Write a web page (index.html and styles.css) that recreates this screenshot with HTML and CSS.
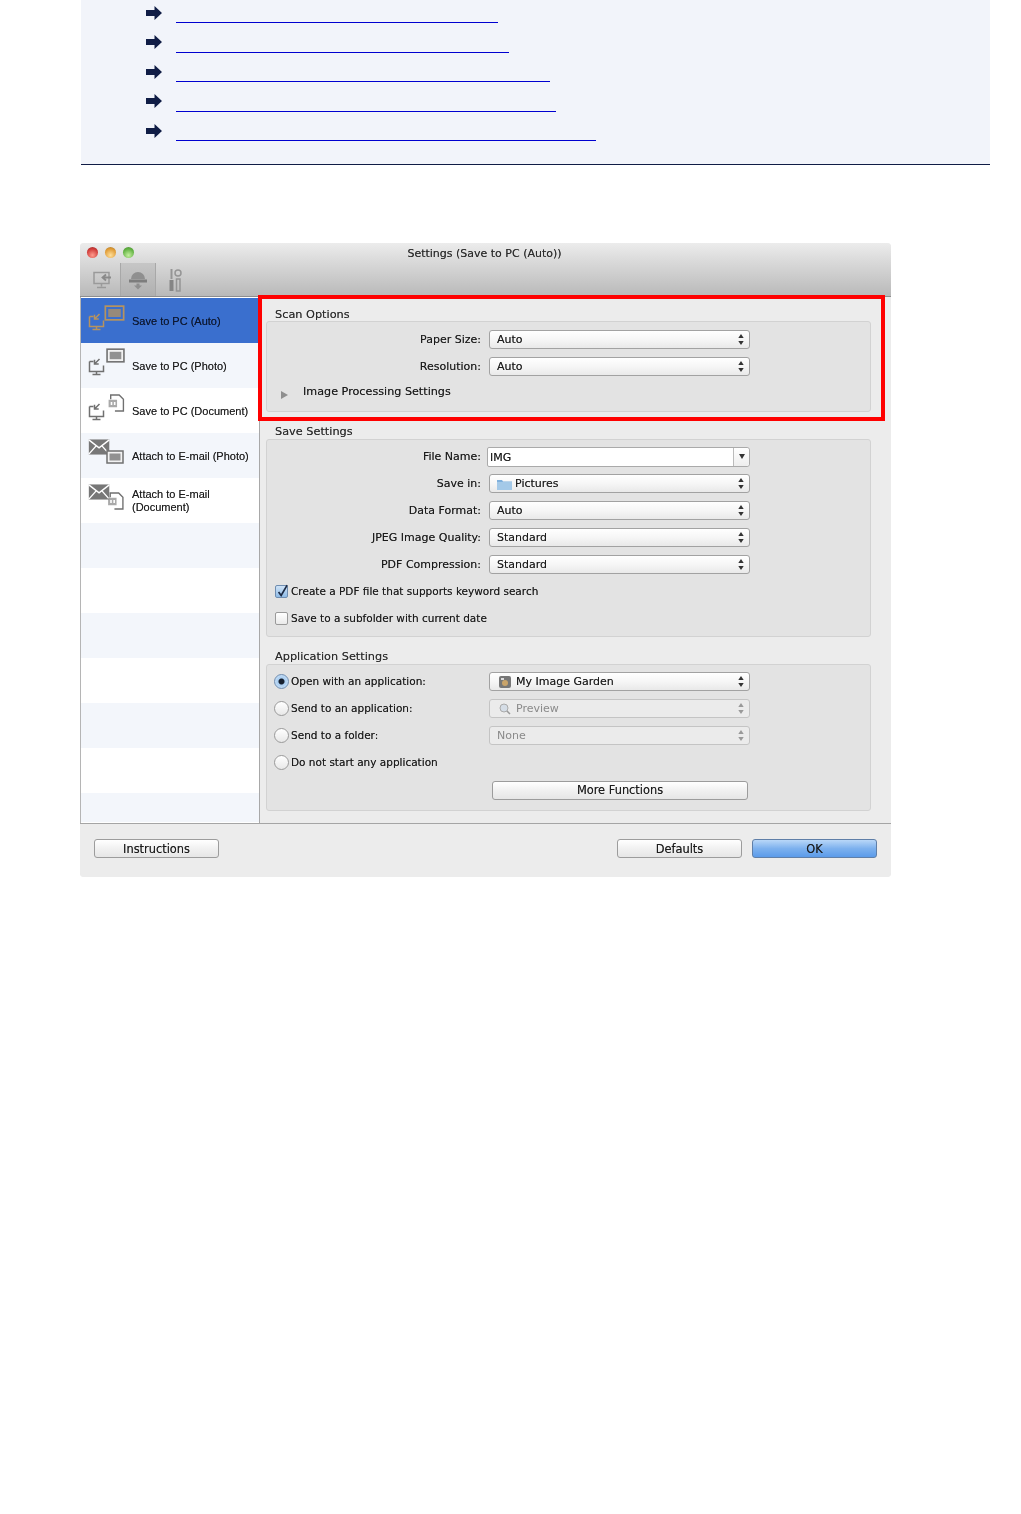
FILE: index.html
```html
<!DOCTYPE html>
<html lang="en">
<head>
<meta charset="utf-8">
<title>Settings (Save to PC (Auto))</title>
<link rel="stylesheet" href="styles.css">
</head>
<body>
<svg class="defs" width="0" height="0" aria-hidden="true">
  <symbol id="arrow" viewBox="0 0 16 14"><path d="M0 4h8.500V0L16 7l-7.500 7V10H0z"/></symbol>
  <symbol id="monitor" viewBox="0 0 20 20">
    <path d="M1.500 5.500h4M1.500 5.500v10h14v-6M8.500 15.500v3M4.500 18.500h8" fill="none" stroke="currentColor" stroke-width="1.500"/>
    <path d="M11.500 3 7 7.500M6.500 3.800v4.200h4.200" fill="none" stroke="currentColor" stroke-width="1.500"/>
  </symbol>
  <symbol id="photo" viewBox="0 0 18 14">
    <rect x="1" y="1" width="16" height="12" fill="var(--frame, #f2f2f2)" stroke="currentColor" stroke-width="1.500"/>
    <rect x="3.500" y="3.500" width="11" height="7" fill="currentColor" opacity=".75"/>
  </symbol>
  <symbol id="doc" viewBox="0 0 16 17">
    <path d="M3 5V1h8l4 4v11H7" fill="#fff" stroke="currentColor" stroke-width="1.300"/>
    <path d="M1 5.500h8v7H1z" fill="currentColor" opacity=".6"/>
    <path d="M3 7.500h1.500v3H3zM6 7.500h1.500v3H6z" fill="#fff"/>
  </symbol>
  <symbol id="mail" viewBox="0 0 24 18">
    <rect width="23" height="17" y=".5" fill="#777"/>
    <path d="M0 1l11.500 9L23 1M0 17l8-9M23 17l-8-9" fill="none" stroke="#fff" stroke-width="1.600"/>
  </symbol>
  <symbol id="updown" viewBox="0 0 6 11"><path d="M3 0l2.700 4H.3zM3 11l2.700-4H.3z"/></symbol>
</svg>

<section class="linkbox">
  <div class="linkrow"><svg class="arrow"><use href="#arrow"/></svg><a class="link l1" href="#" aria-label="Link 1"></a></div>
  <div class="linkrow"><svg class="arrow"><use href="#arrow"/></svg><a class="link l2" href="#" aria-label="Link 2"></a></div>
  <div class="linkrow"><svg class="arrow"><use href="#arrow"/></svg><a class="link l3" href="#" aria-label="Link 3"></a></div>
  <div class="linkrow"><svg class="arrow"><use href="#arrow"/></svg><a class="link l4" href="#" aria-label="Link 4"></a></div>
  <div class="linkrow"><svg class="arrow"><use href="#arrow"/></svg><a class="link l5" href="#" aria-label="Link 5"></a></div>
</section>

<div class="window">
  <header class="chrome">
    <div class="titlebar">
      <div class="lights"><i class="light red"></i><i class="light amber"></i><i class="light green"></i></div>
      <div class="wintitle">Settings (Save to PC (Auto))</div>
    </div>
    <div class="toolbar">
      <div class="tool first">
        <svg viewBox="0 0 20 20" width="20" height="20"><path d="M2 2.500h15v11H2zM9.500 13.500v3M5 17.500h9" fill="none" stroke="#9a9a9a" stroke-width="1.500"/><path d="M19 7.500h-8M14 4.500l-3.500 3 3.500 3" fill="none" stroke="#8a8a8a" stroke-width="1.800"/></svg>
      </div>
      <div class="tool active">
        <svg viewBox="0 0 20 20" width="20" height="20"><path d="M3 9a7 7 0 0 1 14 0z" fill="#8f8f8f"/><rect x="1" y="9.500" width="18" height="3" fill="#7d7d7d"/><path d="M8.500 13.500h3v2H14l-4 4-4-4h2.500z" fill="#8f8f8f"/></svg>
      </div>
      <div class="tool last">
        <svg viewBox="0 0 14 24" width="14" height="24"><path d="M3.500 1v10" stroke="#959595" stroke-width="2"/><path d="M1.500 12h4v11h-4z" fill="#858585"/><circle cx="10" cy="5" r="3" fill="none" stroke="#959595" stroke-width="1.500"/><path d="M8.500 11h3.500v12H8.500z" fill="none" stroke="#959595" stroke-width="1.500"/></svg>
      </div>
    </div>
  </header>

  <div class="body">
    <nav class="sidebar">
      <div class="side selected">
        <div class="sicon"><svg class="ic-mon"><use href="#monitor"/></svg><svg class="ic-doc"><use href="#photo"/></svg></div>
        <span>Save to PC (Auto)</span>
      </div>
      <div class="side alt">
        <div class="sicon"><svg class="ic-mon"><use href="#monitor"/></svg><svg class="ic-photo"><use href="#photo"/></svg></div>
        <span>Save to PC (Photo)</span>
      </div>
      <div class="side">
        <div class="sicon"><svg class="ic-mon"><use href="#monitor"/></svg><svg class="ic-doc"><use href="#doc"/></svg></div>
        <span>Save to PC (Document)</span>
      </div>
      <div class="side alt">
        <div class="sicon"><svg class="ic-mail"><use href="#mail"/></svg><svg class="ic-mphoto"><use href="#photo"/></svg></div>
        <span>Attach to E-mail (Photo)</span>
      </div>
      <div class="side">
        <div class="sicon"><svg class="ic-mail"><use href="#mail"/></svg><svg class="ic-mdoc"><use href="#doc"/></svg></div>
        <span>Attach to E-mail<br>(Document)</span>
      </div>
      <div class="side alt"></div>
      <div class="side"></div>
      <div class="side alt"></div>
      <div class="side"></div>
      <div class="side alt"></div>
      <div class="side"></div>
      <div class="side alt short"></div>
    </nav>

    <main class="content">
      <div class="redbox"></div>

      <h2 class="gtitle">Scan Options</h2>
      <div class="group g-scan">
        <div class="row"><label class="lbl">Paper Size:</label><div class="sel"><span>Auto</span><svg class="ud"><use href="#updown"/></svg></div></div>
        <div class="row"><label class="lbl">Resolution:</label><div class="sel"><span>Auto</span><svg class="ud"><use href="#updown"/></svg></div></div>
        <div class="disclosure"><i class="tri"></i><span>Image Processing Settings</span></div>
      </div>

      <h2 class="gtitle">Save Settings</h2>
      <div class="group g-save">
        <div class="row"><label class="lbl">File Name:</label><div class="combo"><span class="ctext">IMG</span><span class="cbtn"><i class="down"></i></span></div></div>
        <div class="row"><label class="lbl">Save in:</label><div class="sel"><svg class="folder" viewBox="0 0 15 12"><path d="M0 2h5l1 1.500h9V12H0z" fill="#7fb0dc"/><path d="M0 4h15v8H0z" fill="#a4c9e8"/></svg><span>Pictures</span><svg class="ud"><use href="#updown"/></svg></div></div>
        <div class="row"><label class="lbl">Data Format:</label><div class="sel"><span>Auto</span><svg class="ud"><use href="#updown"/></svg></div></div>
        <div class="row"><label class="lbl">JPEG Image Quality:</label><div class="sel"><span>Standard</span><svg class="ud"><use href="#updown"/></svg></div></div>
        <div class="row"><label class="lbl">PDF Compression:</label><div class="sel"><span>Standard</span><svg class="ud"><use href="#updown"/></svg></div></div>
        <div class="opt"><span class="check on"><svg viewBox="0 0 14 14"><path d="M3 7l3 4 7-12" fill="none" stroke="#1c2a44" stroke-width="2"/></svg></span><span class="otext">Create a PDF file that supports keyword search</span></div>
        <div class="opt"><span class="check"></span><span class="otext">Save to a subfolder with current date</span></div>
      </div>

      <h2 class="gtitle">Application Settings</h2>
      <div class="group g-app">
        <div class="row approw"><div class="opt inrow"><span class="radio on"></span><span class="otext">Open with an application:</span></div><div class="sel"><svg class="appicon" viewBox="0 0 12 12"><rect width="12" height="12" rx="2" fill="#777"/><circle cx="6" cy="7" r="3" fill="#c9a46a"/><path d="M2 2h3v2H2z" fill="#ddd"/></svg><span>My Image Garden</span><svg class="ud"><use href="#updown"/></svg></div></div>
        <div class="row approw"><div class="opt inrow"><span class="radio"></span><span class="otext">Send to an application:</span></div><div class="sel off"><svg class="appicon" viewBox="0 0 12 12"><circle cx="5" cy="5" r="4" fill="#d5dde6" stroke="#aaa"/><path d="M8 8l3 3" stroke="#999" stroke-width="1.500"/></svg><span>Preview</span><svg class="ud"><use href="#updown"/></svg></div></div>
        <div class="row approw"><div class="opt inrow"><span class="radio"></span><span class="otext">Send to a folder:</span></div><div class="sel off"><span>None</span><svg class="ud"><use href="#updown"/></svg></div></div>
        <div class="row approw"><div class="opt inrow"><span class="radio"></span><span class="otext">Do not start any application</span></div></div>
        <div class="morewrap"><button class="btn more">More Functions</button></div>
      </div>
    </main>
  </div>

  <footer class="footer">
    <button class="btn">Instructions</button>
    <button class="btn push">Defaults</button>
    <button class="btn ok">OK</button>
  </footer>
</div>
</body>
</html>
```
FILE: styles.css
```css
* { box-sizing: border-box; }
html, body { margin: 0; padding: 0; background: #fff; }
body { height: 1514px; overflow: hidden; font-family: "DejaVu Sans", sans-serif; font-size: 11px; color: #1a1a1a; }
.defs { position: absolute; }

/* top link list */
.linkbox { margin-left: 81px; width: 909px; height: 165px; background: #f2f4fa; border-bottom: 1px solid #101c45; padding-left: 65px; }
.linkrow { height: 29.45px; display: flex; align-items: flex-start; }
.arrow { width: 16px; height: 14px; margin-top: 6px; fill: #101c45; flex: none; }
.link { display: block; height: 1px; margin-top: 22.200px; margin-left: 14px; background: #0000d0; }
.l1 { width: 322px; }
.l2 { width: 333px; }
.l3 { width: 374px; }
.l4 { width: 380px; }
.l5 { width: 420px; }

/* window */
.window { margin: 78px 0 0 80px; width: 811px; height: 634px; background: #ececec; border-radius: 4px; overflow: hidden; display: flex; flex-direction: column; filter: blur(.45px); text-shadow: 0 0 .4px rgba(0,0,0,.55); }
.chrome { height: 54px; flex: none; background: linear-gradient(#ececec, #dcdcdc 30%, #b9b9b9); border-bottom: 1px solid #8e8e8e; display: flex; flex-direction: column; }
.titlebar { height: 20px; position: relative; flex: none; display: flex; align-items: center; justify-content: center; }
.lights { position: absolute; left: 7px; top: 4px; display: flex; gap: 7px; }
.light { width: 11px; height: 11px; border-radius: 50%; display: block; }
.red { background: radial-gradient(circle at 50% 75%, #ff9c8e, #cf3a38 65%, #8f3030); }
.amber { background: radial-gradient(circle at 50% 75%, #ffdf9a, #df9a34 65%, #9c7430); }
.green { background: radial-gradient(circle at 50% 75%, #c5f0a0, #5fb040 65%, #4f8a3a); }
.wintitle { color: #2c2c2c; margin-left: -2px; }
.toolbar { flex: 1; display: flex; align-items: stretch; padding-left: 8px; }
.tool { display: flex; align-items: center; justify-content: center; }
.tool.first { width: 32px; padding-right: 5px; }
.tool.active { width: 36px; background: linear-gradient(#c6c6c6, #b0b0b0); border-left: 1px solid #a8a8a8; border-right: 1px solid #a8a8a8; }
.tool.last { width: 38px; }

.body { flex: 1; display: flex; min-height: 0; }
.sidebar { width: 180px; flex: none; padding-top: 1px; border-left: 1px solid #b5b5b5; border-right: 1px solid #a8a8a8; background: #fff; font-family: "Liberation Sans", sans-serif; font-size: 11px; color: #1c1c1c; }
.side { height: 45px; display: flex; align-items: center; background: #fff; line-height: 13px; }
.side span { margin-left: 8px; margin-top: 1px; }
.side.alt { background: #f3f6fb; }
.side.short { height: 29px; }
.side.selected { background: #3a6fce; color: #0d1730; --frame: transparent; }
.sicon { position: relative; width: 35px; height: 45px; color: #707070; flex: none; margin-left: 8px; }
.selected .sicon { color: #b6935f; }
.sicon svg { position: absolute; }
.ic-mon { left: -1px; top: 13px; width: 20px; height: 20px; }
.ic-photo { left: 17px; top: 5px; width: 19px; height: 15px; }
.ic-doc { left: 18px; top: 6px; width: 18px; height: 18px; }
.selected .ic-doc { left: 15px; top: 7px; width: 21px; height: 16px; }
.ic-mail { left: -1px; top: 6px; width: 23px; height: 16px; }
.ic-mphoto { left: 17px; top: 17px; width: 18px; height: 14px; }
.ic-mdoc { left: 18px; top: 14px; width: 17px; height: 18px; }

.content { flex: 1; position: relative; padding: 9px 20px 0 6px; }
.redbox { position: absolute; left: -2px; top: -2px; width: 627px; height: 126px; border: 4px solid #f00; pointer-events: none; z-index: 2; }
.gtitle { margin: 0 0 0 9px; height: 15px; line-height: 15px; font-size: 11.300px; font-weight: normal; color: #2c2c2c; }
.gtitle:first-of-type { line-height: 17px; }
.group { background: #e3e3e3; border: 1px solid #d2d2d2; border-radius: 3px; margin-bottom: 12px; }
.g-scan { height: 91px; padding-top: 4px; }
.g-save { height: 198px; padding-top: 3px; }
.g-app { height: 147px; padding-top: 3px; }

.row { height: 27px; display: grid; grid-template-columns: 214px 261px; column-gap: 8px; align-items: center; }
.approw { padding-left: 8px; grid-template-columns: 206px 261px; }
.lbl { text-align: right; }
.sel { height: 19px; display: flex; align-items: center; padding: 0 5px 0 7px; background: linear-gradient(#fff, #f6f6f6 50%, #e9e9e9); border: 1px solid #a2a2a2; border-radius: 3px; color: #1c1c1c; }
.sel span { flex: 1; }
.sel.off { background: #ebebeb; border-color: #c4c4c4; color: #8a8a8a; text-shadow: none; }
.ud { width: 6px; height: 11px; flex: none; fill: #333; }
.sel.off .ud { fill: #999; }
.folder { width: 15px; height: 12px; margin-right: 3px; flex: none; }
.appicon { width: 12px; height: 12px; margin: 0 5px 0 2px; flex: none; }
.combo { height: 20px; margin-left: -2px; width: 263px; display: flex; background: #fff; border: 1px solid #aaa; border-radius: 2px 3px 3px 2px; }
.ctext { flex: 1; padding-left: 2px; line-height: 19px; }
.cbtn { width: 16px; border-left: 1px solid #bbb; background: linear-gradient(#fff, #eee); display: flex; align-items: center; justify-content: center; border-radius: 0 3px 3px 0; }
.down { width: 0; height: 0; border-left: 3.500px solid transparent; border-right: 3.500px solid transparent; border-top: 5px solid #333; }

.disclosure { height: 25px; display: flex; align-items: center; padding-left: 14px; font-size: 11.200px; }
.disclosure span { margin-top: -2px; }
.tri { width: 0; height: 0; border-top: 4px solid transparent; border-bottom: 4px solid transparent; border-left: 7px solid #8f8f8f; margin-top: 5px; margin-right: 15px; }

.opt { height: 27px; display: flex; align-items: center; padding-left: 8px; gap: 3px; font-size: 10.500px; }
.opt.inrow { padding-left: 0; gap: 2px; }
.otext { margin-top: -1px; }
.check { width: 13px; height: 13px; flex: none; background: linear-gradient(#fff, #eaeaea); border: 1px solid #9a9a9a; border-radius: 2px; display: block; }
.check.on { background: linear-gradient(#cfe3f7, #8fbbe6); border-color: #6f8db0; }
.check svg { display: block; width: 12px; height: 12px; overflow: visible; }
.radio { width: 15px; height: 15px; flex: none; border-radius: 50%; background: linear-gradient(#fff, #e8e8e8); border: 1px solid #9a9a9a; margin-left: -1px; display: block; }
.radio.on { background: radial-gradient(circle, #16202f 0 2.500px, #a9cdf0 3.500px, #d8e9fa); border-color: #6f8db0; }

.morewrap { display: flex; padding: 1px 0 0 225px; height: 27px; align-items: center; }
.btn { font: inherit; font-size: 11.400px; height: 19px; width: 125px; padding: 0; color: #1c1c1c; text-shadow: inherit; background: linear-gradient(#fff, #f1f1f1 50%, #e6e6e6); border: 1px solid #9c9c9c; border-radius: 3px; }
.btn.more { width: 256px; }

.footer { height: 54px; flex: none; border-top: 1px solid #a5a5a5; background: #ececec; display: flex; align-items: flex-start; padding: 15px 14px 0 14px; gap: 10px; }
.push { margin-left: auto; }
.ok { background: linear-gradient(#b9d7f8, #7db1ee 50%, #5b9bea); border-color: #5f7fa8; }
```
